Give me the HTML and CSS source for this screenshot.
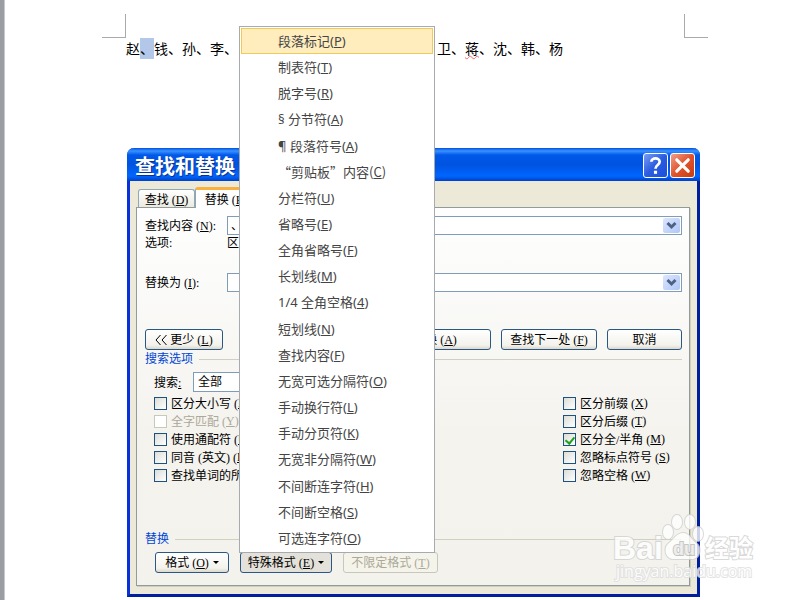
FILE: index.html
```html
<!DOCTYPE html>
<html lang="zh-CN">
<head>
    <meta charset="UTF-8">
    <meta name="viewport" content="width=device-width, initial-scale=1.0">
    <title>查找和替换</title>
    <link rel="stylesheet" href="styles.css">
</head>
<body>
    <main class="page">
        <div class="margins">
            <span class="corner corner-left"></span>
            <span class="corner corner-right"></span>
        </div>
        <p class="names">
            <span>赵<mark>、</mark>钱、孙、李、</span>
            <span>卫、<span class="typo">蒋</span>、沈、韩、杨</span>
        </p>
    </main>

    <section class="dialog">
        <header class="titlebar">
            <h1>查找和替换</h1>
            <button class="help" aria-label="帮助">
                <svg width="25" height="25" viewBox="0 0 24 24"><path d="M8 8.5C8 4 16 4 16 8.5C16 11.5 12 11.5 12 15" fill="none" stroke="#fff" stroke-width="2.6"/><rect x="10.5" y="17" width="3" height="3" fill="#fff"/></svg>
            </button>
            <button class="close" aria-label="关闭">
                <svg width="25" height="25" viewBox="0 0 24 24"><path d="M6.5 6.5L17.5 17.5M17.5 6.5L6.5 17.5" stroke="#fff" stroke-width="3" stroke-linecap="round"/></svg>
            </button>
        </header>
        <nav class="tabs">
            <button class="tab">查找 (<u>D</u>)</button>
            <button class="tab active">替换 (<u>P</u>)</button>
        </nav>
        <div class="panel">
            <div class="row">
                <label for="find">查找内容 (<u>N</u>):</label>
                <div class="combo">
                    <input type="text" id="find" value="、">
                    <button aria-label="展开"><svg width="17" height="15" viewBox="0 0 17 15"><path d="M4.5 5L8.5 9L12.5 5" fill="none" stroke="#4d6185" stroke-width="3"/></svg></button>
                </div>
            </div>
            <div class="row options">
                <span class="name">选项:</span>
                <span>区分全/半角</span>
            </div>
            <div class="row replace">
                <label for="replace">替换为 (<u>I</u>):</label>
                <div class="combo">
                    <input type="text" id="replace">
                    <button aria-label="展开"><svg width="17" height="15" viewBox="0 0 17 15"><path d="M4.5 5L8.5 9L12.5 5" fill="none" stroke="#4d6185" stroke-width="3"/></svg></button>
                </div>
            </div>
            <div class="actions">
                <button class="btn less"><svg width="12" height="12" viewBox="0 0 12 12"><path d="M5.5 1L1 6L5.5 11M11.5 1L7 6L11.5 11" fill="none" stroke="#000"/></svg> 更少 (<u>L</u>)</button>
                <button class="btn all">全部替换 (<u>A</u>)</button>
                <button class="btn next">查找下一处 (<u>F</u>)</button>
                <button class="btn cancel">取消</button>
            </div>
            <h2>搜索选项</h2>
            <div class="search">
                <label for="scope">搜索<u>:</u></label>
                <select id="scope"><option>全部</option></select>
            </div>
            <div class="checks">
                <div class="col">
                    <label><input type="checkbox">区分大小写 (<u>H</u>)</label>
                    <label class="off"><input type="checkbox" disabled>全字匹配 (<u>Y</u>)</label>
                    <label><input type="checkbox">使用通配符 (<u>U</u>)</label>
                    <label><input type="checkbox">同音 (英文) (<u>K</u>)</label>
                    <label><input type="checkbox">查找单词的所有形式 (英文) (<u>W</u>)</label>
                </div>
                <div class="col col-right">
                    <label><input type="checkbox">区分前缀 (<u>X</u>)</label>
                    <label><input type="checkbox">区分后缀 (<u>T</u>)</label>
                    <label><input type="checkbox" checked>区分全/半角 (<u>M</u>)</label>
                    <label><input type="checkbox">忽略标点符号 (<u>S</u>)</label>
                    <label><input type="checkbox">忽略空格 (<u>W</u>)</label>
                </div>
            </div>
            <h2 class="second">替换</h2>
            <div class="formats">
                <button class="btn format">格式 (<u>O</u>)<i class="arrow"></i></button>
                <button class="btn special">特殊格式 (<u>E</u>)<i class="arrow"></i></button>
                <button class="btn unlimited" disabled>不限定格式 (<u>T</u>)</button>
            </div>
        </div>
    </section>

    <ul class="menu">
        <li class="selected">段落标记(<u>P</u>)</li>
        <li>制表符(<u>T</u>)</li>
        <li>脱字号(<u>R</u>)</li>
        <li>§ 分节符(<u>A</u>)</li>
        <li>¶ 段落符号(<u>A</u>)</li>
        <li class="quoted">“剪贴板”内容(<u>C</u>)</li>
        <li>分栏符(<u>U</u>)</li>
        <li>省略号(<u>E</u>)</li>
        <li>全角省略号(<u>F</u>)</li>
        <li>长划线(<u>M</u>)</li>
        <li>1/4 全角空格(<u>4</u>)</li>
        <li>短划线(<u>N</u>)</li>
        <li>查找内容(<u>F</u>)</li>
        <li>无宽可选分隔符(<u>O</u>)</li>
        <li>手动换行符(<u>L</u>)</li>
        <li>手动分页符(<u>K</u>)</li>
        <li>无宽非分隔符(<u>W</u>)</li>
        <li>不间断连字符(<u>H</u>)</li>
        <li>不间断空格(<u>S</u>)</li>
        <li>可选连字符(<u>O</u>)</li>
    </ul>

    <svg class="watermark" width="150" height="75" viewBox="0 0 150 75">
        <g class="mark">
            <text class="bai" x="1" y="48">Bai</text>
            <ellipse cx="56" cy="21" rx="5" ry="7"/>
            <ellipse cx="65" cy="11" rx="5" ry="7"/>
            <ellipse cx="78" cy="11" rx="5" ry="7"/>
            <ellipse cx="86" cy="23" rx="5" ry="7"/>
            <path d="M71 22C77 22 79 28 84 32C90 37 88 48 80 48C74 48 68 48 62 48C53 48 51 37 57 32C62 28 65 22 71 22Z"/>
            <text class="du" x="61" y="44">du</text>
            <text class="jy" x="93" y="46">经验</text>
            <text class="url" x="4" y="66">jingyan.baidu.com</text>
        </g>
    </svg>
</body>
</html>
```
FILE: styles.css
```css
*{
    margin: 0;
    padding: 0;
    box-sizing: border-box;
}
body{
    position: relative;
    min-height: 100vh;
    overflow: hidden;
    background: #fff;
    font-family: "Liberation Serif", "Noto Sans CJK SC", serif;
    font-size: 12px;
    color: #000;
}
button, input, select{
    font: inherit;
    color: inherit;
}
.page{
    min-height: 100vh;
    padding: 14px 92px 0 98px;
    border-left: 4px solid #9a9da2;
    box-shadow: inset 1px 0 #c3cad5;
}
.margins{
    display: flex;
    justify-content: space-between;
}
.corner{
    width: 24px;
    height: 24px;
    border-bottom: 1px solid #aaa;
}
.corner-left{
    border-right: 1px solid #aaa;
}
.corner-right{
    border-left: 1px solid #aaa;
}
.names{
    display: flex;
    gap: 199px;
    padding-left: 24px;
    font-family: "Noto Sans CJK SC", sans-serif;
    font-size: 14px;
    line-height: 21px;
    white-space: nowrap;
}
.names mark{
    display: inline-block;
    background: #b3c8e8;
    color: #000;
}
.typo{
    text-decoration: underline wavy #f66 1px;
}

/* dialog */
.dialog{
    position: absolute;
    top: 148px;
    left: 127px;
    right: 100px;
    border: 3px solid #0831d9;
    border-top: 0;
    border-right-color: #001ea0;
    border-bottom-color: #001ea0;
    border-radius: 7px 7px 0 0;
    background: #ece9d8;
}
.titlebar{
    display: flex;
    align-items: center;
    gap: 2px;
    height: 33px;
    margin: 0 -3px;
    padding: 2px 5px 0 8px;
    border-radius: 7px 7px 0 0;
    background: linear-gradient(#0050e0, #3a93ff 3px, #0058ea 7px, #0053e0 50%, #0066ff 85%, #0040c8);
}
.titlebar h1{
    flex: 1;
    font-family: "Noto Sans CJK SC", sans-serif;
    font-size: 20px;
    line-height: 30px;
    color: #fff;
    text-shadow: 1px 1px #0a318c;
}
.titlebar button{
    width: 25px;
    height: 25px;
    border: 1px solid #fff;
    border-radius: 3px;
    background: linear-gradient(135deg, #7a9cf5, #2a5ce0 50%, #1c50dc);
}
.titlebar .close{
    background: linear-gradient(135deg, #f0a08a, #e0532e 50%, #c83c10);
}
.titlebar svg{
    display: block;
    margin: -1px;
}
.tabs{
    display: flex;
    align-items: flex-start;
    padding: 6px 8px 0;
}
.tab{
    width: 57px;
    height: 18px;
    margin-top: 2px;
    border: 1px solid #91a7b4;
    border-bottom: 0;
    border-radius: 3px 3px 0 0;
    background: linear-gradient(#fff, #eceadf);
    white-space: nowrap;
}
.tab.active{
    z-index: 1;
    width: 61px;
    height: 21px;
    margin: 0 0 -1px;
    border-top: 3px solid #f9b03c;
    background: #fefefe;
}
.panel{
    margin: 0 7px 8px 6px;
    padding: 8px 7px 12px 8px;
    border: 1px solid #919b9c;
    box-shadow: 1px 1px #d0cebf;
    background: linear-gradient(#fefefe, #f4f3ee 60%, #f3f2ed);
}
.row{
    display: flex;
    align-items: center;
    line-height: 16px;
}
.row label, .row .name{
    width: 82px;
}
.combo{
    display: flex;
    flex: 1;
    height: 19px;
    padding: 1px;
    border: 1px solid #7f9db9;
    background: #fff;
}
.combo input{
    flex: 1;
    min-width: 0;
    padding-left: 2px;
    border: 0;
    outline: 0;
}
.combo button{
    width: 17px;
    border: 0;
    border-radius: 2px;
    background: linear-gradient(135deg, #dbe6ff, #afc6f5);
}
.combo svg{
    display: block;
}
.row.replace{
    margin-top: 22px;
}
.actions{
    display: flex;
    gap: 10px;
    margin-top: 37px;
}
.btn{
    height: 21px;
    border: 1px solid #2b5784;
    border-radius: 3px;
    background: linear-gradient(#fff, #f3f2ec 80%, #dcd8ca);
    line-height: 18px;
    white-space: nowrap;
}
.less{
    width: 78px;
    margin-right: auto;
}
.less svg{
    vertical-align: -2px;
}
.all{
    width: 136px;
}
.next{
    width: 96px;
}
.cancel{
    width: 75px;
}
h2{
    display: flex;
    align-items: center;
    gap: 6px;
    font-size: 12px;
    font-weight: normal;
    line-height: 18px;
    color: #0046d5;
}
h2::after{
    content: "";
    flex: 1;
    height: 1px;
    background: #d0d0bf;
}
.search{
    display: flex;
    align-items: center;
    margin: 4px 0 2px 9px;
}
.search label{
    width: 39px;
}
.search select{
    width: 100px;
    height: 20px;
    padding-left: 4px;
    border: 1px solid #7f9db9;
    background: #fff;
    appearance: none;
}
.checks{
    display: flex;
    justify-content: space-between;
    padding-left: 9px;
}
.col label{
    display: flex;
    align-items: center;
    height: 18px;
    white-space: pre;
}
.col-right{
    width: 119px;
}
.col input{
    width: 13px;
    height: 13px;
    margin-right: 4px;
    border: 1px solid #1c5180;
    background: linear-gradient(135deg, #dcdcd7, #fff);
    appearance: none;
}
.col input:checked::after{
    content: "";
    display: block;
    width: 4px;
    height: 7px;
    margin: 1px 0 0 3px;
    border: solid #21a121;
    border-width: 0 2px 2px 0;
    transform: rotate(40deg);
}
.col .off{
    color: #aca899;
}
.col .off input{
    border-color: #cac8bb;
    background: #fff;
}
.second{
    margin-top: 46px;
}
.formats{
    display: flex;
    gap: 11px;
    margin: 4px 0 0 10px;
}
.format{
    width: 74px;
}
.special{
    width: 92px;
    background: #e3e1d9;
}
.unlimited{
    width: 95px;
    border-color: #c9c7ba;
    background: #f5f4ea;
    color: #aca899;
}
.arrow{
    display: inline-block;
    margin-left: 4px;
    border: 3px solid transparent;
    border-top-color: #000;
    border-bottom: 0;
    vertical-align: 3px;
}

/* special format menu */
.menu{
    position: absolute;
    z-index: 2;
    top: 26px;
    left: 239px;
    display: grid;
    width: 196px;
    min-height: 527px;
    padding: 1px;
    border: 1px solid #a7abb0;
    background: #fff;
    list-style: none;
    font-family: "Noto Sans", "Noto Sans CJK SC", sans-serif;
    font-size: 13px;
    line-height: 24px;
    color: #444;
}
.menu li{
    padding-left: 36px;
    border: 1px solid transparent;
}
.menu .selected{
    border-color: #f2ca58;
    background: #ffedbe;
}
.menu .quoted{
    font-family: "Noto Sans CJK SC", sans-serif;
}

.watermark{
    position: absolute;
    right: 38px;
    bottom: 14px;
}
.mark{
    fill: #fff;
    stroke: #d0d0d0;
    stroke-width: 2px;
    paint-order: stroke;
    opacity: 0.8;
}
.bai{
    font-family: "Liberation Sans", sans-serif;
    font-size: 32px;
    font-weight: bold;
}
.du{
    font-family: "Liberation Sans", sans-serif;
    font-size: 18px;
    font-weight: bold;
    fill: #eee;
    stroke: #bbb;
}
.jy{
    font-family: "Noto Sans CJK SC", sans-serif;
    font-size: 24px;
    font-weight: bold;
}
.url{
    font-family: "Open Sans", sans-serif;
    font-size: 16px;
    stroke: #ddd;
}
```
